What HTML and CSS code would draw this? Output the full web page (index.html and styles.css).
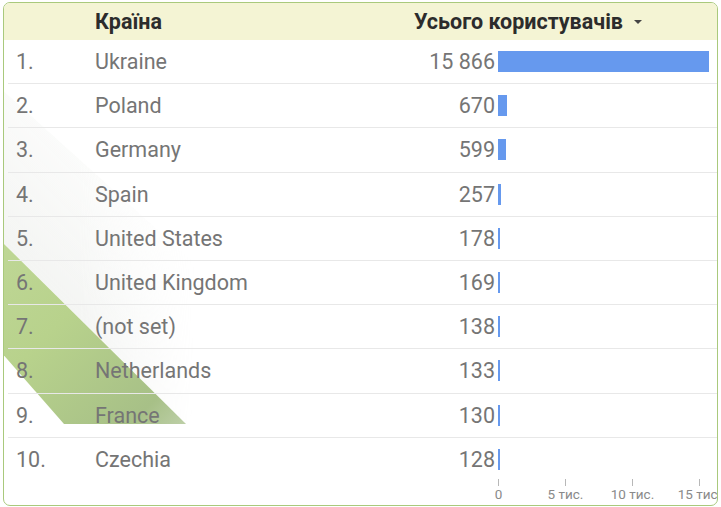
FILE: index.html
```html
<!DOCTYPE html>
<html lang="uk">
<head>
<meta charset="utf-8">
<link rel="stylesheet" href="styles.css">
</head>
<body>
<div class="card">
  <div class="deco deco-grey"></div>
  <div class="deco deco-green"></div>
  <div class="head">
    <div class="h-name">Країна</div>
    <div class="h-metric">Усього користувачів <span class="arrow"></span></div>
  </div>
  <div class="rows">
    <div class="row"><span class="idx">1.</span><span class="name">Ukraine</span><span class="val">15&nbsp;866</span><span class="barcell"><span class="bar" style="width:211px"></span></span></div>
    <div class="row"><span class="idx">2.</span><span class="name">Poland</span><span class="val">670</span><span class="barcell"><span class="bar" style="width:9px"></span></span></div>
    <div class="row"><span class="idx">3.</span><span class="name">Germany</span><span class="val">599</span><span class="barcell"><span class="bar" style="width:8px"></span></span></div>
    <div class="row"><span class="idx">4.</span><span class="name">Spain</span><span class="val">257</span><span class="barcell"><span class="bar" style="width:3.4px"></span></span></div>
    <div class="row"><span class="idx">5.</span><span class="name">United States</span><span class="val">178</span><span class="barcell"><span class="bar" style="width:2.4px"></span></span></div>
    <div class="row"><span class="idx">6.</span><span class="name">United Kingdom</span><span class="val">169</span><span class="barcell"><span class="bar" style="width:2.3px"></span></span></div>
    <div class="row"><span class="idx">7.</span><span class="name">(not set)</span><span class="val">138</span><span class="barcell"><span class="bar" style="width:2px"></span></span></div>
    <div class="row"><span class="idx">8.</span><span class="name">Netherlands</span><span class="val">133</span><span class="barcell"><span class="bar" style="width:2px"></span></span></div>
    <div class="row"><span class="idx">9.</span><span class="name">France</span><span class="val">130</span><span class="barcell"><span class="bar" style="width:2px"></span></span></div>
    <div class="row last"><span class="idx">10.</span><span class="name">Czechia</span><span class="val">128</span><span class="barcell"><span class="bar" style="width:2px"></span></span></div>
  </div>
  <div class="axis">
    <div class="tick"><i></i><span>0</span></div>
    <div class="tick"><i></i><span>5 тис.</span></div>
    <div class="tick"><i></i><span>10 тис.</span></div>
    <div class="tick"><i></i><span>15 тис.</span></div>
  </div>
</div>
</body>
</html>
```

FILE: styles.css
```css
* { box-sizing: border-box; }
html, body { margin: 0; padding: 0; background: #ffffff; }
body {
  font-family: Roboto, "Liberation Sans", Arial, sans-serif;
  width: 721px;
  height: 507px;
  overflow: hidden;
}
.card {
  position: relative;
  margin: 2px 0 0 3px;
  width: 715px;
  height: 504px;
  border: 1px solid #a9c97c;
  border-radius: 7px;
  overflow: hidden;
  background: #fff;
}
.deco {
  position: absolute;
  left: -4px;
  top: 0;
  width: 260px;
  height: 430px;
  pointer-events: none;
  z-index: 0;
}
.deco-green {
  clip-path: polygon(0 237px, 186px 421px, 64px 421px, 0 348px);
  background: linear-gradient(135deg, #cadfa6 0%, #b8d28c 55%, #a7c087 80%, #dfe6da 100%);
}
.deco-grey {
  clip-path: polygon(0 85px, 250px 310px, 186px 421px, 0 237px);
  background: linear-gradient(225deg, rgba(255,255,255,0) 35%, rgba(232,234,230,0.45) 70%, rgba(222,226,218,0.6) 100%);
  -webkit-mask-image: linear-gradient(to right, #000 30%, transparent 75%);
  mask-image: linear-gradient(to right, #000 30%, transparent 75%);
}
.head {
  position: relative;
  z-index: 1;
  height: 37px;
  background: #f4f4d4;
  display: flex;
  align-items: center;
  font-weight: 700;
  font-size: 21.5px;
  color: #2c2c2c;
}
.h-name { padding-left: 91px; }
.h-metric {
  margin-left: auto;
  padding-right: 75px;
  display: flex;
  align-items: center;
}
.arrow {
  display: inline-block;
  margin-left: 11px;
  width: 0;
  height: 0;
  border-left: 4px solid transparent;
  border-right: 4px solid transparent;
  border-top: 4px solid #444;
}
.rows { position: relative; z-index: 1; }
.row {
  height: 44.2px;
  display: flex;
  align-items: center;
  border-bottom: 1px solid #e8e8e8;
  margin-left: 4px;
  font-size: 21.5px;
  color: #757575;
}
.row.last { border-bottom: none; }
.idx { width: 87px; padding-left: 8px; }
.name { flex: 1; }
.val { width: 120px; text-align: right; }
.barcell { width: 222px; padding-left: 3px; display: flex; align-items: center; }
.bar { display: block; height: 21px; background: #6699ee; min-width: 2px; }
.axis {
  position: relative;
  z-index: 1;
  display: flex;
  margin-left: 461px;
  margin-top: -3px;
}
.tick {
  width: 67px;
  display: flex;
  flex-direction: column;
  align-items: center;
  flex-shrink: 0;
}
.tick i { display: block; width: 1px; height: 7px; background: #b8b8b8; }
.tick span { font-size: 13.5px; color: #8a8a8a; margin-top: 0; white-space: nowrap; }
```
